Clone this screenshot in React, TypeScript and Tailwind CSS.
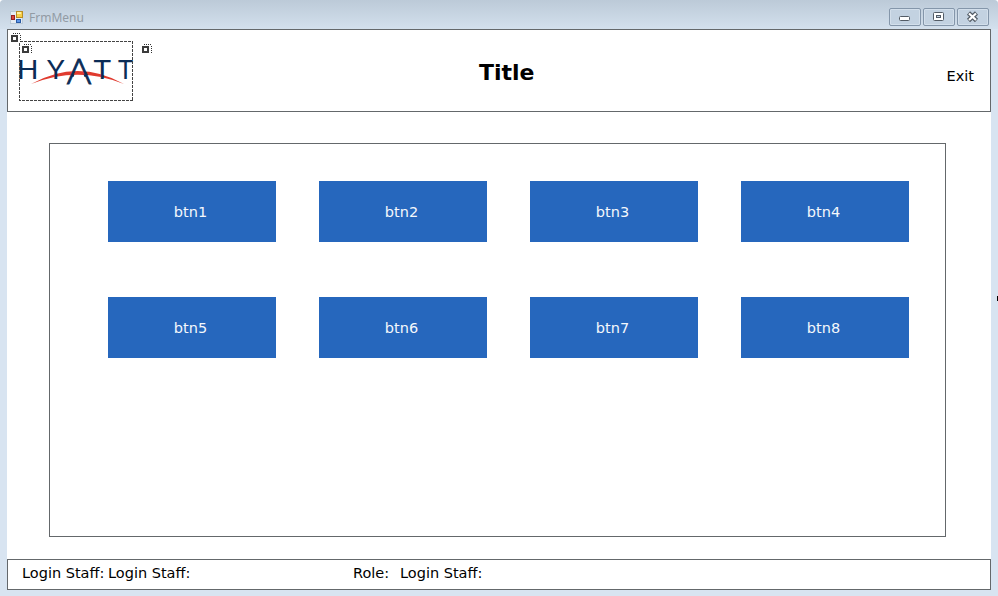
import type { ReactNode } from "react";

const buttons = ["btn1", "btn2", "btn3", "btn4", "btn5", "btn6", "btn7", "btn8"];

function FormIcon() {
  return (
    <svg width="15" height="15" viewBox="0 0 15 15" className="shrink-0">
      <rect x="0.5" y="1.5" width="12" height="12" fill="#e4ebf2" stroke="#b9c8d6" />
      <rect x="6.5" y="1.5" width="6" height="6" fill="#f7cf48" stroke="#b98d24" />
      <rect x="7" y="2" width="4" height="2" fill="#fff0a0" />
      <rect x="1.5" y="5.5" width="3" height="4" fill="#d9443c" stroke="#982020" />
      <rect x="6.5" y="9.5" width="4" height="3" fill="#5d95e8" stroke="#285aa5" />
    </svg>
  );
}

function Caption({ children }: { children: ReactNode }) {
  return (
    <div className="h-[18px] w-[32px] rounded-[2px] border border-[#8496aa] bg-[#c3d2e1] shadow-[inset_0_0_0_1px_#d3dfeb]">
      <svg width="30" height="16" viewBox="0 0 30 16" className="block">
        {children}
      </svg>
    </div>
  );
}

function Handle({ place }: { place: string }) {
  return (
    <svg width="10" height="10" viewBox="0 0 10 10" className={`absolute ${place}`} shapeRendering="crispEdges">
      <path d="M2 .5h8M9.5 2v7" stroke="#333" strokeDasharray="1 1" />
      <rect x="1" y="3" width="5" height="5" fill="#fff" stroke="#3c3c3c" strokeWidth="2" />
    </svg>
  );
}

function Logo() {
  return (
    <svg width="114" height="60" viewBox="19 41 114 60" className="block overflow-visible">
      <defs>
        {/* Leaves out the middle letter's crossbar, which the red arc replaces */}
        <clipPath id="open-a">
          <path clipRule="evenodd" d="M60 50H100V90H60ZM75.300 72H82.700L85.200 79H72.800Z" />
        </clipPath>
      </defs>
      <path d="M31 84Q78 58 124 84Q78 65.500 31 84Z" fill="#e03a2e" />
      <g fill="#0b2c56" fontFamily="Lato, sans-serif" fontSize="26.500">
        <text x="17" y="78.500" textLength="21.500" lengthAdjust="spacingAndGlyphs">H</text>
        <text x="47" y="78.500" textLength="17.500" lengthAdjust="spacingAndGlyphs">Y</text>
        <g clipPath="url(#open-a)">
          <text x="66.500" y="84" fontSize="35.500" fontWeight="300" stroke="#0b2c56" strokeWidth="0.800" textLength="25" lengthAdjust="spacingAndGlyphs">A</text>
        </g>
        <text x="93.500" y="78.500" textLength="17.500" lengthAdjust="spacingAndGlyphs">T</text>
        <text x="118" y="78.500" textLength="15" lengthAdjust="spacingAndGlyphs">T</text>
      </g>
      <rect x="19.500" y="41.500" width="113" height="59" fill="none" stroke="#444" strokeDasharray="3 1" shapeRendering="crispEdges" />
    </svg>
  );
}

export default function App() {
  return (
    <div className="relative flex h-[596px] w-[998px] flex-col overflow-hidden rounded-t-[4px] bg-[#d8e4f1] pr-[7px] pb-[6px] pl-[7px] font-['DejaVu_Sans',sans-serif] text-[14.5px] text-black">
      <div className="-mx-[7px] flex h-[29px] shrink-0 items-start bg-linear-to-b from-[#bccad8] to-[#d3e0ed] pt-[8px] pr-[9px] pl-[10px]">
        <div className="flex h-[18px] items-center gap-[4px]">
          <FormIcon />
          <span className="relative top-px font-['Noto_Sans',sans-serif] text-[12px] leading-[18px] text-[#929ba4]">FrmMenu</span>
        </div>
        <div className="ml-auto flex gap-[2px]">
          <Caption>
            <rect x="9.500" y="7.500" width="10" height="4" rx="1" fill="#fff" stroke="#535c66" />
          </Caption>
          <Caption>
            <rect x="9.500" y="3.500" width="10" height="8" rx="1" fill="#fff" stroke="#535c66" />
            <rect x="12.500" y="6.500" width="4" height="2" fill="#c3d2e1" stroke="#535c66" />
          </Caption>
          <Caption>
            <path d="M10.500 4l8 7.500M18.500 4l-8 7.500" stroke="#535c66" strokeWidth="4.500" />
            <path d="M11 4.500l7 6.500M18 4.500l-7 6.500" stroke="#fff" strokeWidth="2.200" />
          </Caption>
        </div>
      </div>

      <header className="relative flex h-[83px] shrink-0 border border-[#64686b] bg-white pt-[11px] pl-[11px]">
        <Logo />
        <h1 className="ml-[346px] pt-[18px] text-[22px] leading-[28px] font-bold">Title</h1>
        <span className="mr-[16px] ml-auto pt-[25px] leading-[20px]">Exit</span>
        <Handle place="left-[3px] top-[3px]" />
        <Handle place="left-[14px] top-[14px]" />
        <Handle place="left-[134px] top-[14px]" />
      </header>

      <main className="flex-1 bg-white pt-[31px] pl-[42px]">
        <section className="h-[394px] w-[897px] border border-[#64686b] pt-[37px] pl-[58px]">
          <div className="grid grid-cols-[repeat(4,168px)] gap-x-[43px] gap-y-[55px]">
            {buttons.map((label) => (
              <button key={label} className="h-[61px] bg-[#2667bd] pt-[3px] pr-[3px] text-[14.5px] text-[#f4f8fc]">
                {label}
              </button>
            ))}
          </div>
        </section>
      </main>

      <footer className="flex h-[31px] shrink-0 border border-[#64686b] bg-white pt-[3px] pl-[14px] leading-[20px] whitespace-nowrap">
        <span className="w-[86px]">Login Staff:</span>
        <span className="w-[245px]">Login Staff:</span>
        <span className="w-[47px]">Role:</span>
        <span>Login Staff:</span>
      </footer>
      <div className="absolute top-[296px] right-0 h-[5px] w-px bg-black" />
    </div>
  );
}
